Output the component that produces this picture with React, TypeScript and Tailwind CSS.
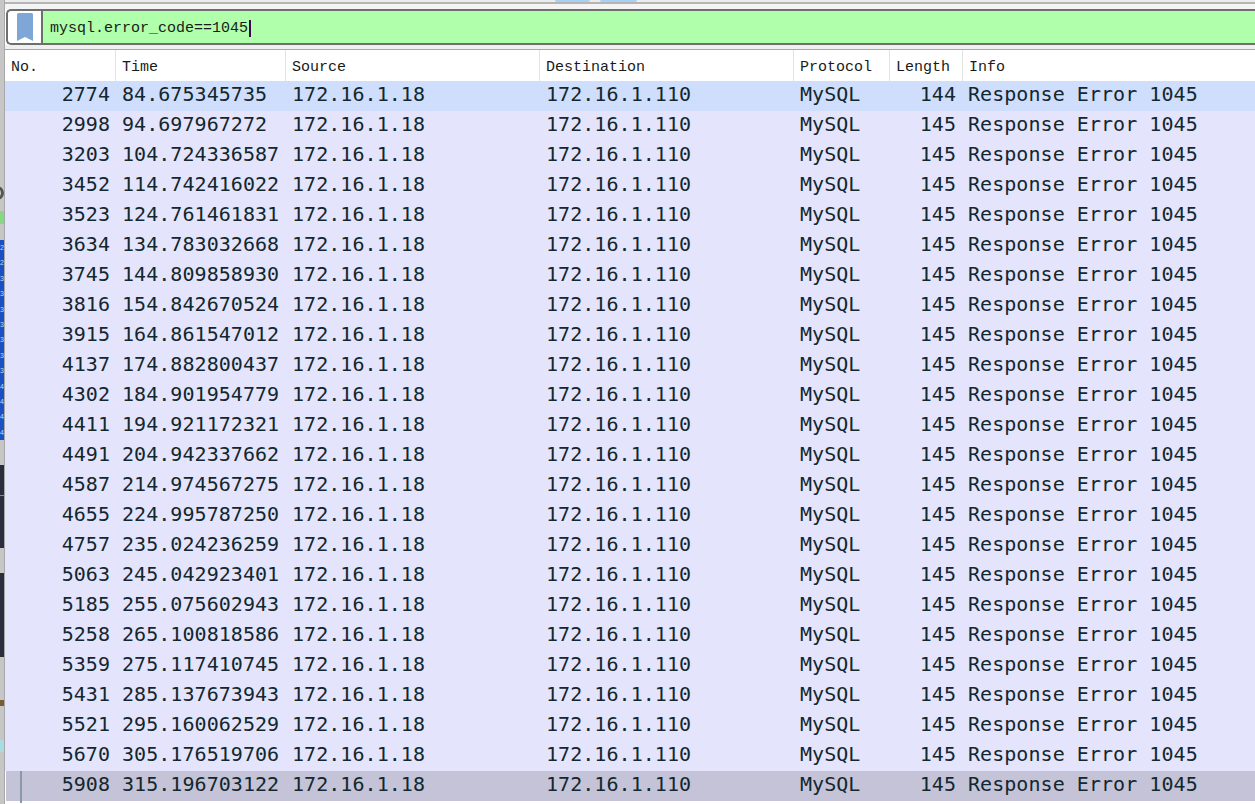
import React from 'react';

const rows: [number, string][] = [
  [2774, '84.675345735'],
  [2998, '94.697967272'],
  [3203, '104.724336587'],
  [3452, '114.742416022'],
  [3523, '124.761461831'],
  [3634, '134.783032668'],
  [3745, '144.809858930'],
  [3816, '154.842670524'],
  [3915, '164.861547012'],
  [4137, '174.882800437'],
  [4302, '184.901954779'],
  [4411, '194.921172321'],
  [4491, '204.942337662'],
  [4587, '214.974567275'],
  [4655, '224.995787250'],
  [4757, '235.024236259'],
  [5063, '245.042923401'],
  [5185, '255.075602943'],
  [5258, '265.100818586'],
  [5359, '275.117410745'],
  [5431, '285.137673943'],
  [5521, '295.160062529'],
  [5670, '305.176519706'],
  [5908, '315.196703122'],
];

const headers = [
  { label: 'No.', width: 'w-[111px]' },
  { label: 'Time', width: 'w-[170px]' },
  { label: 'Source', width: 'w-[254px]' },
  { label: 'Destination', width: 'w-[254px]' },
  { label: 'Protocol', width: 'w-[96px]' },
  { label: 'Length', width: 'w-[73px]' },
  { label: 'Info', width: 'flex-1' },
];

const stripDigits = ['2', '2', '3', '3', '3', '3', '3', '3', '3', '4', '4', '4', '4'];

// Sliver of the window behind, only its right edge shows
const BackgroundStrip = () => (
  <div className="flex h-full w-[5px] shrink-0 flex-col overflow-hidden border-r border-[#a8a8a8] bg-[#c6c6c6]">
    <div className="h-[186px] shrink-0" />
    <div className="ml-[-10px] h-[14px] w-[14px] shrink-0 rounded-full border-[3px] border-[#555555] bg-[#c6c6c6]" />
    <div className="h-[11px] shrink-0" />
    <div className="h-[13px] shrink-0 bg-[#86d884]" />
    <div className="h-[16px] shrink-0" />
    <div className="flex h-[200px] shrink-0 flex-col items-end bg-[#1b4fc4]">
      {stripDigits.map((digit, i) => (
        <div key={i} className="h-[15.4px] shrink-0 text-[7px] leading-[15px] text-[#c8d4f0] [font-family:'Liberation_Sans',sans-serif]">
          {digit}
        </div>
      ))}
    </div>
    <div className="h-[25px] shrink-0" />
    <div className="h-[30px] shrink-0 bg-[#2a2d3c]" />
    <div className="h-[53px] shrink-0 border-t border-[#8a8d98] bg-[#2a2d3c]" />
    <div className="h-[25px] shrink-0" />
    <div className="h-[84px] shrink-0 bg-[#2a2d3c]" />
    <div className="h-[43px] shrink-0" />
    <div className="h-[6px] shrink-0 bg-[#7a5a30]" />
    <div className="h-[34px] shrink-0" />
    <div className="h-[12px] shrink-0 bg-[#a8dce0]" />
  </div>
);

const FilterBar = () => (
  <div className="flex h-[36px] items-stretch overflow-hidden rounded-l-[5px] border-y-[2px] border-l-[2px] border-[#6e6e6e] bg-white">
    <div className="flex w-[35px] shrink-0 items-center justify-center border-r-[2px] border-[#6e6e6e]">
      <svg width="16" height="28" viewBox="0 0 16 28">
        <path d="M1.5 0h13a1.5 1.5 0 0 1 1.5 1.5V28l-8-4-8 4V1.5A1.5 1.5 0 0 1 1.5 0z" fill="#7ea6d6" />
      </svg>
    </div>
    <div className="flex flex-1 items-center bg-[#afffab] pl-[7px] pt-[2px] text-[15px] text-[#1a1a1a] [font-family:'Liberation_Mono',monospace]">
      <span className="pt-[3px]">mysql.error_code==1045</span>
      <span className="ml-px h-[17px] w-[2px] bg-[#3a0a4a]" />
    </div>
  </div>
);

const PacketRow = ({ no, time, index }: { no: number; time: string; index: number }) => {
  const isFirst = index === 0;
  const isLast = index === rows.length - 1;
  return (
    <div
      className={`relative flex h-[30px] shrink-0 items-center whitespace-pre pb-[4px] text-[20px] tracking-[0.05px] text-[#12272e] [font-family:'DejaVu_Sans_Mono',monospace] ${
        isFirst ? 'bg-[#cfdefc]' : isLast ? 'ml-px bg-[#c4c3d8]' : 'bg-[#e4e4fc]'
      }`}
    >
      {isLast && <div className="absolute left-[14px] top-0 h-[32px] w-[2px] bg-[#8a9aa5]" />}
      <div className={`${isLast ? 'w-[110px]' : 'w-[111px]'} pr-[6px] text-right`}>{no}</div>
      <div className="w-[170px] pl-[6px]">{time}</div>
      <div className="w-[254px] pl-[6px]">172.16.1.18</div>
      <div className="w-[254px] pl-[6px]">172.16.1.110</div>
      <div className="w-[96px] pl-[6px]">MySQL</div>
      <div className="w-[73px] pr-[7px] text-right">{isFirst ? 144 : 145}</div>
      <div className="flex-1 pl-[5px]">Response Error 1045</div>
    </div>
  );
};

export default function App() {
  return (
    <div className="relative flex h-[804px] w-[1255px] overflow-hidden bg-white">
      <BackgroundStrip />
      <div className="flex min-w-0 flex-1 flex-col">
        <div className="flex h-[2px] shrink-0 bg-[#ececec]">
          <div className="ml-[550px] w-[35px] rounded-b-sm bg-[#a8d0f4]" />
          <div className="ml-[10px] w-[37px] rounded-b-sm bg-[#a8d0f4]" />
        </div>
        <div className="h-[2px] shrink-0 bg-[#b5b5b5]" />
        <div className="h-[5px] shrink-0 bg-[#f4f4f4]" />
        <div className="pl-px">
          <FilterBar />
        </div>
        <div className="h-[5px] shrink-0 border-b border-[#a8a8a8] bg-[#f0f0f0]" />
        <div className="flex h-[31px] shrink-0 items-center bg-white text-[15px] text-[#1a1a1a] [font-family:'Liberation_Mono',monospace]">
          {headers.map((header) => (
            <div
              key={header.label}
              className={`${header.width} flex h-full items-center border-r border-[#e3e3e3] pl-[6px] pt-[6px] last:border-r-0`}
            >
              {header.label}
            </div>
          ))}
        </div>
        {rows.map(([no, time], i) => (
          <PacketRow key={no} no={no} time={time} index={i} />
        ))}
      </div>
    </div>
  );
}
